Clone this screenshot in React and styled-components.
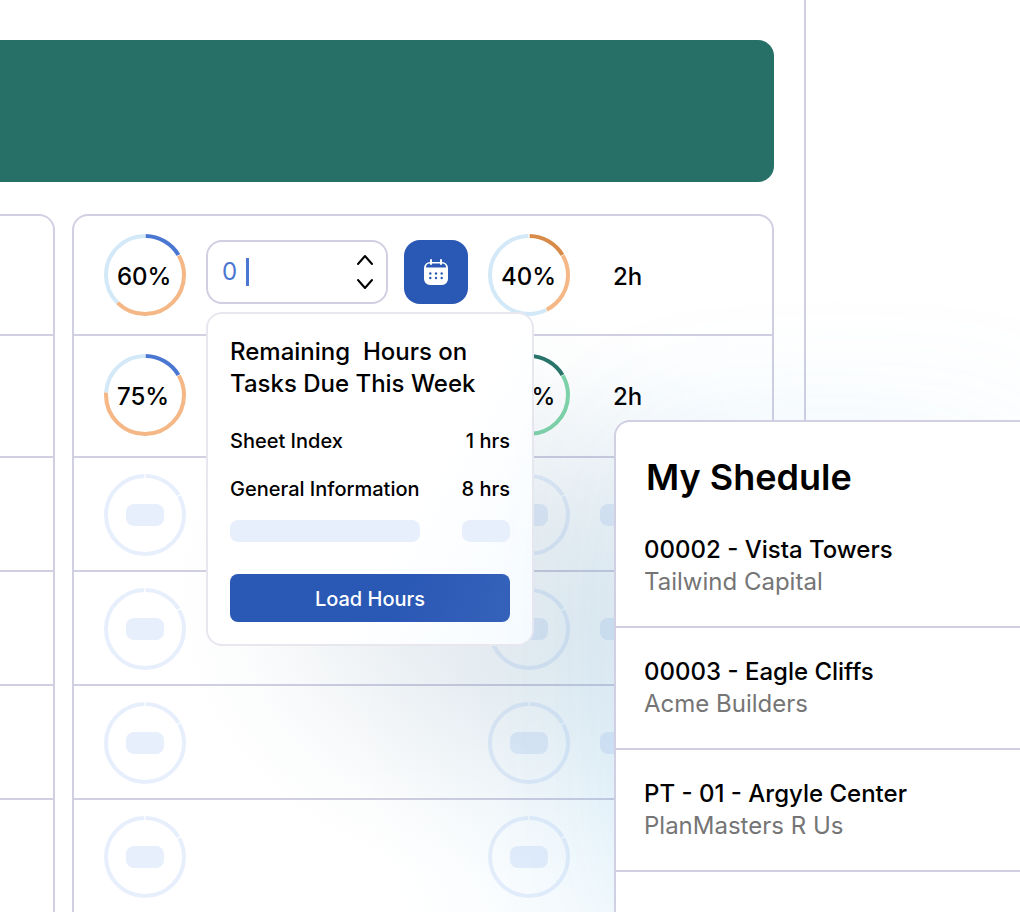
// src/App.jsx
import React, { useState } from 'react';
import styled, { createGlobalStyle } from 'styled-components';

const BLUE = '#4a77d2';
const ORANGE = '#f4b785';
const SKY = '#d3e9f8';
const MUTED = '#e8effc';

const placeholderArcs = [
  { from: 1, to: 59, color: MUTED },
  { from: 61, to: 359, color: MUTED },
];

const rows = [
  {
    id: 1,
    height: 120,
    editable: true,
    first: {
      label: '60%',
      arcs: [
        { from: 1, to: 59, color: BLUE },
        { from: 60, to: 225, color: ORANGE },
        { from: 225, to: 360, color: SKY },
      ],
    },
    second: {
      label: '40%',
      arcs: [
        { from: 1, to: 59, color: '#d88b49' },
        { from: 60, to: 153, color: ORANGE },
        { from: 154, to: 359, color: SKY },
      ],
    },
    hours: '2h',
  },
  {
    id: 2,
    height: 122,
    first: {
      label: '75%',
      arcs: [
        { from: 1, to: 59, color: BLUE },
        { from: 60, to: 274, color: ORANGE },
        { from: 274, to: 360, color: SKY },
      ],
    },
    second: {
      label: '80%',
      arcs: [
        { from: 1, to: 59, color: '#27746a' },
        { from: 60, to: 288, color: '#80d5a9' },
        { from: 288, to: 360, color: SKY },
      ],
    },
    hours: '2h',
  },
  { id: 3, height: 114 },
  { id: 4, height: 114 },
  { id: 5, height: 114 },
  { id: 6, height: 112, hideHours: true },
];

const tasks = [
  { name: 'Sheet Index', hours: '1 hrs' },
  { name: 'General Information', hours: '8 hrs' },
];

const projects = [
  { name: '00002 - Vista Towers', client: 'Tailwind Capital' },
  { name: '00003 - Eagle Cliffs', client: 'Acme Builders' },
  { name: 'PT - 01 - Argyle Center', client: 'PlanMasters R Us' },
];

const Ring = ({ label, arcs = placeholderArcs }) => (
  <RingBox>
    <RingSvg viewBox="0 0 82 82" aria-hidden="true">
      {arcs.map((arc) => (
        <circle
          key={arc.from}
          cx="41"
          cy="41"
          r="39"
          fill="none"
          stroke={arc.color}
          strokeWidth="4"
          pathLength="360"
          strokeDasharray={`${arc.to - arc.from} 360`}
          strokeDashoffset={-arc.from}
          transform="rotate(-90 41 41)"
        />
      ))}
    </RingSvg>
    {label ? <RingLabel>{label}</RingLabel> : <Skeleton $width={38} />}
  </RingBox>
);

const CalendarIcon = () => (
  <svg width="24" height="28" viewBox="0 0 24 28" aria-hidden="true">
    <path
      fill="#fff"
      fillRule="evenodd"
      d="M6 4h12a6 6 0 0 1 6 6v11a6 6 0 0 1-6 6H6a6 6 0 0 1-6-6V10a6 6 0 0 1 6-6zM2 9.600h20a4 4 0 0 0-4-4H6a4 4 0 0 0-4 4z"
    />
    <path d="M7 2v4M17 2v4" stroke="#fff" strokeWidth="2" strokeLinecap="round" />
    <g fill="#2a58b5">
      {[15.5, 20].map((cy) =>
        [6.3, 12, 17.7].map((cx) => <circle key={`${cx}-${cy}`} cx={cx} cy={cy} r="1.2" />)
      )}
    </g>
  </svg>
);

const HoursEditor = () => {
  const [hours, setHours] = useState(0);

  return (
    <Editor>
      <HoursField>
        <HoursInput
          aria-label="Hours"
          value={hours}
          onChange={(e) => setHours(Number(e.target.value) || 0)}
        />
        <Caret />
        <Stepper>
          <StepButton aria-label="Increase hours" onClick={() => setHours(hours + 1)}>
            <svg width="18" height="12" viewBox="0 0 18 12">
              <path d="M2 10l7-8 7 8" />
            </svg>
          </StepButton>
          <StepButton
            aria-label="Decrease hours"
            onClick={() => setHours(Math.max(0, hours - 1))}
          >
            <svg width="18" height="12" viewBox="0 0 18 12">
              <path d="M2 2l7 8 7-8" />
            </svg>
          </StepButton>
        </Stepper>
      </HoursField>
      <CalendarButton aria-label="Open calendar">
        <CalendarIcon />
      </CalendarButton>
      <Popover>
        <PopoverTitle>{'Remaining  Hours on\nTasks Due This Week'}</PopoverTitle>
        {tasks.map((task) => (
          <TaskRow key={task.name}>
            <span>{task.name}</span>
            <span>{task.hours}</span>
          </TaskRow>
        ))}
        <SkeletonRow>
          <Skeleton $width={190} />
          <Skeleton $width={48} />
        </SkeletonRow>
        <LoadButton>Load Hours</LoadButton>
      </Popover>
    </Editor>
  );
};

const App = () => (
  <>
    <GlobalStyle />
    <Page>
      <Main>
        <Banner />
        <Cards>
          <SideCard>
            {rows.map((row) => (
              <Row key={row.id} $height={row.height} />
            ))}
          </SideCard>
          <HoursCard>
            {rows.map((row) => (
              <HoursRow key={row.id} $height={row.height} $filled={Boolean(row.first)}>
                <Ring {...row.first} />
                <Cell>{row.editable && <HoursEditor />}</Cell>
                <Ring {...row.second} />
                {row.hours ? (
                  <HoursText>{row.hours}</HoursText>
                ) : (
                  <HoursPlaceholder>
                    {!row.hideHours && <Skeleton $width={38} />}
                  </HoursPlaceholder>
                )}
              </HoursRow>
            ))}
          </HoursCard>
        </Cards>
      </Main>
      <Glow />
      <Schedule>
        <ScheduleTitle>My Shedule</ScheduleTitle>
        {projects.map((project) => (
          <Project key={project.name}>
            <ProjectName>{project.name}</ProjectName>
            <ProjectClient>{project.client}</ProjectClient>
          </Project>
        ))}
      </Schedule>
    </Page>
  </>
);

const GlobalStyle = createGlobalStyle`
  * {
    box-sizing: border-box;
  }

  body {
    margin: 0;
    background: #fff;
    color: #000;
    font-family: Inter, 'Liberation Sans', sans-serif;
    font-size: 24px;
    line-height: 32px;
  }

  button,
  input {
    font: inherit;
    border: none;
    padding: 0;
  }

  button {
    cursor: pointer;
  }
`;

const Page = styled.div`
  position: relative;
  display: grid;
  grid-template-columns: minmax(0, 1fr) 214px;
  min-height: 100vh;
  overflow: hidden;
`;

const Main = styled.main`
  display: flex;
  flex-direction: column;
  gap: 32px;
  padding: 40px 30px 0 0;
  border-right: 2px solid #d1cfe2;
`;

const Banner = styled.div`
  height: 142px;
  border-radius: 0 16px 16px 0;
  background: #277067;
`;

const Cards = styled.div`
  display: flex;
  flex: 1;
  gap: 17px;
`;

const SideCard = styled.section`
  flex: 1;
  border: 2px solid #d1cfe2;
  border-width: 2px 2px 0 0;
  border-radius: 0 16px 0 0;
`;

const HoursCard = styled.section`
  flex: 0 0 702px;
  border: 2px solid #d1cfe2;
  border-bottom: none;
  border-radius: 16px 16px 0 0;
`;

const Row = styled.div`
  height: ${({ $height }) => $height}px;
  border-bottom: 2px solid #d1cfe2;

  &:last-child {
    border-bottom: none;
  }
`;

const HoursRow = styled(Row)`
  display: grid;
  grid-template-columns: 82px 262px 82px 1fr;
  align-items: start;
  gap: 20px;
  padding: ${({ $filled }) => ($filled ? 18 : 16)}px 30px 0;
`;

const Cell = styled.div`
  padding-top: 6px;
`;

const RingBox = styled.div`
  position: relative;
  display: flex;
  align-items: center;
  justify-content: center;
  height: 82px;
`;

const RingSvg = styled.svg`
  position: absolute;
  inset: 0;
`;

const RingLabel = styled.span`
  flex: 1;
  padding: 4px 0 0 13px;
  font-weight: 500;
`;

const Skeleton = styled.div`
  width: ${({ $width }) => $width}px;
  height: 22px;
  border-radius: 8px;
  background: ${MUTED};
`;

const HoursText = styled.span`
  padding: 27px 0 0 23px;
  font-weight: 500;
`;

const HoursPlaceholder = styled.div`
  padding: 30px 0 0 10px;
`;

const Editor = styled.div`
  position: relative;
  display: flex;
  gap: 16px;
`;

const HoursField = styled.div`
  display: flex;
  flex: 1;
  align-items: center;
  height: 64px;
  padding: 0 12px 0 14px;
  border: 2px solid #d1cfe2;
  border-radius: 16px;
  background: #fff;
`;

const HoursInput = styled.input`
  width: 24px;
  background: none;
  color: ${BLUE};
  outline: none;
`;

const Caret = styled.span`
  width: 3px;
  height: 28px;
  background: ${BLUE};
`;

const Stepper = styled.div`
  display: flex;
  flex-direction: column;
  gap: 12px;
  margin-left: auto;
`;

const StepButton = styled.button`
  display: flex;
  background: none;

  path {
    fill: none;
    stroke: #000;
    stroke-width: 2;
    stroke-linecap: round;
    stroke-linejoin: round;
  }
`;

const CalendarButton = styled.button`
  display: flex;
  align-items: center;
  justify-content: center;
  width: 64px;
  height: 64px;
  border-radius: 16px;
  background: #2a58b5;
`;

const Popover = styled.div`
  position: absolute;
  top: 72px;
  left: 0;
  z-index: 2;
  width: 328px;
  padding: 22px;
  border: 2px solid #e8e7f0;
  border-radius: 16px;
  background: linear-gradient(120deg, #fff 60%, #f6fbff);
`;

const PopoverTitle = styled.h2`
  margin: 0 0 24px;
  font-size: 24px;
  font-weight: 500;
  line-height: 32px;
  white-space: pre;
`;

const TaskRow = styled.div`
  display: flex;
  justify-content: space-between;
  margin-bottom: 14px;
  font-size: 20px;
  font-weight: 500;
  line-height: 34px;
`;

const SkeletonRow = styled.div`
  display: flex;
  justify-content: space-between;
  margin-bottom: 32px;
`;

const LoadButton = styled.button`
  width: 100%;
  height: 48px;
  padding-top: 2px;
  border-radius: 8px;
  background: linear-gradient(110deg, #2a58b5 60%, #3562b9);
  color: #fff;
  font-size: 20px;
  font-weight: 500;
`;

const Glow = styled.div`
  position: absolute;
  inset: 0;
  z-index: 1;
  pointer-events: none;
  background:
    radial-gradient(
      ellipse 320px 290px at 490px 590px,
      rgba(70, 110, 140, 0.13),
      rgba(70, 110, 140, 0.11) 30%,
      rgba(70, 110, 140, 0.07) 52%,
      rgba(70, 110, 140, 0.02) 80%,
      transparent
    ),
    radial-gradient(
      ellipse 360px 420px at 720px 740px,
      rgba(90, 180, 225, 0.16),
      rgba(90, 180, 225, 0.12) 30%,
      rgba(90, 180, 225, 0.07) 52%,
      rgba(90, 180, 225, 0.02) 80%,
      transparent
    );
`;

const Schedule = styled.aside`
  position: absolute;
  top: 420px;
  right: 0;
  bottom: 0;
  z-index: 3;
  width: 406px;
  border: 2px solid #d1cfe2;
  border-width: 2px 0 0 2px;
  border-radius: 16px 0 0 0;
  background: #fff;
  box-shadow: 20px 20px 160px rgba(100, 180, 240, 0.1);
`;

const ScheduleTitle = styled.h1`
  margin: 0;
  padding: 33px 30px 7px;
  font-size: 36px;
  font-weight: 600;
  line-height: 44px;
`;

const Project = styled.div`
  padding: 28px;
  border-bottom: 2px solid #d1cfe2;
`;

const ProjectName = styled.p`
  margin: 0;
  font-weight: 500;
`;

const ProjectClient = styled.p`
  margin: 0;
  color: #757575;
`;

export default App;
